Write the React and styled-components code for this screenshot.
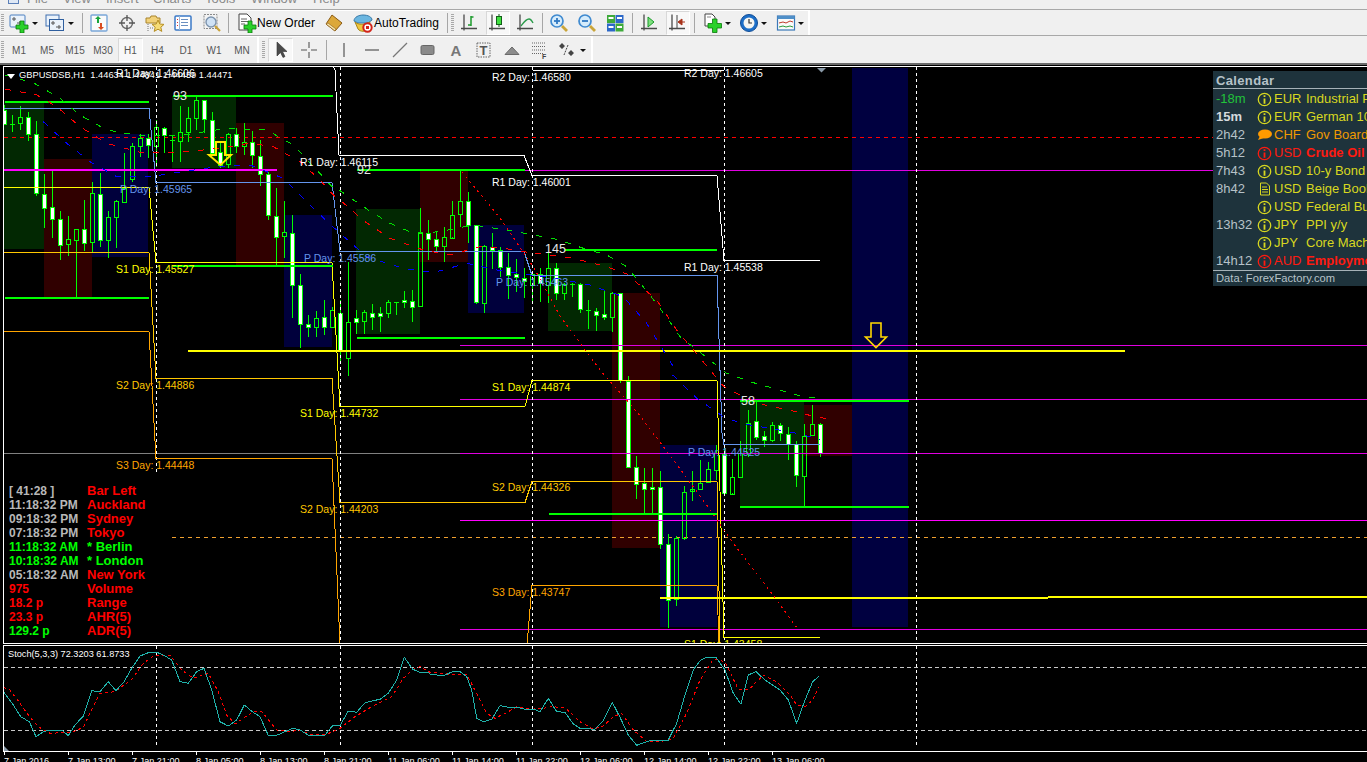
import React from "react";
import styled, { createGlobalStyle } from "styled-components";

const Global = createGlobalStyle`
  html, body { margin: 0; padding: 0; background: #000; overflow: hidden; }
  * { box-sizing: border-box; }
`;
const FONT = `"Liberation Sans", Arial, sans-serif`;

const Page = styled.div`
  width: 1367px; height: 762px; display: flex; flex-direction: column;
  overflow: hidden; font-family: ${FONT}; background: #f0f0f0;
`;
const MenuBar = styled.div`
  height: 10px; flex: none; display: flex; overflow: hidden; background: #f0f0f0;
  border-bottom: 1px solid #a8a8a8; position: relative;
`;
const MenuLogo = styled.div`
  width: 11px; height: 11px; margin: -7px 0 0 8px; border: 1px solid #5b7fb8; background: #dfe8f5; flex: none;
`;
const MenuItem = styled.span`
  flex: none; width: ${p => p.$w}px; font-size: 13px; line-height: 15px; color: #8a8a8a; margin-top: -9px;
`;
const ToolRow = styled.div`
  height: ${p => p.$h}px; flex: none; display: flex; background: #f0f0f0;
  border-bottom: ${p => (p.$rule ? "1px solid #a8a8a8" : "none")};
`;
const Band = styled.div`
  flex: none; width: ${p => p.$w}px; display: flex; align-items: center; height: 100%;
  border-right: 2px solid #fff; border-top: 1px solid #fff;
`;
const Gripper = styled.div`
  flex: none; width: ${p => p.$w}px; height: 18px; padding-left: ${p => p.$pad || 1}px;
  &::before { content: ""; display: block; width: 3px; height: 18px;
    background: repeating-linear-gradient(#a8a8a8 0 1px, transparent 1px 2px); }
`;
const Sep = styled.div`
  flex: none; width: 1px; height: 20px; background: #a6a6a6; margin-left: ${p => p.$ml || 0}px;
`;
const Tool = styled.div`
  flex: none; width: ${p => p.$w}px; height: 24px; margin-left: ${p => p.$ml || 0}px;
  display: flex; align-items: center; justify-content: center; font-size: 10px; color: #555;
  ${p => p.$on && `
    background-color: #f8f8f8;
    background-image: radial-gradient(#e4e4e4 0.5px, transparent 0.6px);
    background-size: 2px 2px;
    border: 1px solid #d8d8d8; border-right-color: #fff; border-bottom-color: #fff;
  `}
`;
const TextTool = styled.div`
  flex: none; width: ${p => p.$w}px; height: 24px; margin-left: ${p => p.$ml || 0}px;
  padding-left: ${p => p.$pad}px; display: flex; align-items: center; gap: ${p => p.$gap}px;
  font-size: 12px; color: #000; white-space: nowrap;
`;
const Drop = styled.div`
  flex: none; width: ${p => p.$w}px; height: 24px; display: flex; align-items: center; justify-content: center;
  &::before { content: ""; border: 3px solid transparent; border-top: 3px solid #111; border-bottom: 0; width: 0; height: 0; }
`;

/* ---------- toolbar drawings ---------- */
const Plus = ({ x = 9, y = 9, s = 11 }) => {
  const t = s / 3;
  return (
    <path
      d={`M${x + t} ${y}h${t}v${t}h${t}v${t}h${-t}v${t}h${-t}v${-t}h${-t}v${-t}h${t}z`}
      fill="#2ad12a" stroke="#0a7a0a" strokeWidth=".8"
    />
  );
};
const I = ({ w = 20, h = 20, children }) => (
  <svg width={w} height={h} viewBox="0 0 20 20">{children}</svg>
);
const Axes = ({ c = "#4a4a4a" }) => (
  <path d="M4 1.5V17.5M1 15.5H17" stroke={c} strokeWidth="1.3" fill="none" />
);
const NewChartIcon = () => (
  <I>
    <rect x="1" y="2" width="15" height="12" rx="1" fill="#eaf2fb" stroke="#4a7fc0" />
    <path d="M3 6h4M5 4v4M8 10h5M11 8v4" stroke="#555" />
    <Plus x={7} y={8} s={12} />
  </I>
);
const ProfileIcon = () => (
  <I>
    <rect x="1" y="2" width="13" height="11" fill="#eaf2fb" stroke="#3f6fb0" />
    <rect x="4.5" y="6.5" width="14" height="11" fill="#eaf2fb" stroke="#2f5f9f" />
    <path d="M6 10h4M8 8v4M11 14h5M14 12v4" stroke="#555" />
  </I>
);
const WatchIcon = () => (
  <I>
    <rect x="2" y="2" width="16" height="16" rx="1" fill="#fafafa" stroke="#7aa7d8" strokeWidth="1.4" />
    <path d="M8 10V6H6l3-3 3 3h-2v4z" fill="#19a53a" />
    <path d="M11 10v4H9l3 3 3-3h-2v-4z" fill="#d84b1e" />
  </I>
);
const CrossIcon = () => (
  <I>
    <circle cx="10" cy="10" r="5.5" fill="none" stroke="#6a6a6a" strokeWidth="1.4" />
    <path d="M10 2v6M10 12v6M2 10h6M12 10h6" stroke="#555" strokeWidth="1.3" />
  </I>
);
const NavIcon = () => (
  <I w={20}>
    <path d="M1 5h4l1 -2h5l1 2h3v5H1z" fill="#f2d27a" stroke="#a8842c" />
    <path d="M13 7l1.8 4 4.2.4-3.2 2.8 1 4.2-3.8-2.2-3.8 2.2 1-4.2L7 11.4l4.2-.4z" fill="#f6dc76" stroke="#b68f24" />
    <path d="M3 11v7M5 15h4" stroke="#777" strokeDasharray="1 1" />
  </I>
);
const TermIcon = () => (
  <I>
    <rect x="2" y="3" width="16" height="14" rx="1" fill="#fff" stroke="#3a78c6" strokeWidth="1.5" />
    <path d="M6.5 3v14" stroke="#9ab8dc" />
    <path d="M4 6.5h1M4 9.5h1M4 12.5h1" stroke="#d33" />
    <path d="M8 6.5h7M8 9.5h7M8 12.5h7" stroke="#6a8fc0" />
  </I>
);
const TesterIcon = () => (
  <I>
    <rect x="2" y="1.5" width="13" height="14" fill="#f3f3f3" stroke="#8a8a8a" strokeDasharray="2 1" />
    <circle cx="9" cy="9" r="5" fill="#cfe2f5" stroke="#7c93ad" strokeWidth="1.4" />
    <path d="M13 13l5 5" stroke="#c9a23a" strokeWidth="2.2" />
  </I>
);
const OrderIcon = () => (
  <I w={20} h={20}>
    <path d="M2 1h8l4 4v12H2z" fill="#fff" stroke="#444" />
    <path d="M4 6h6M4 8.5h7M4 11h4" stroke="#666" />
    <Plus x={7} y={8} s={12} />
  </I>
);
const BookIcon = () => (
  <I>
    <path d="M8 2l10 8-7 8L2 11z" fill="#dca83a" stroke="#8a5a14" />
    <path d="M2 11l9 7 1-2-8-6z" fill="#f5e2a8" stroke="#8a5a14" strokeWidth=".6" />
  </I>
);
const AutoIcon = () => (
  <I w={20} h={20}>
    <path d="M1 8c0-4 5-6 9-6 5 0 9 2 9 5l-4 3H5z" fill="#6bb6e0" stroke="#3a7aa8" />
    <path d="M2 9c3 3 10 3 15 0l-2 7c-2 3-8 3-10 0z" fill="#f0c63c" stroke="#a88518" />
    <circle cx="14.5" cy="14.5" r="4.2" fill="#fff" stroke="#d2241a" strokeWidth="2" />
    <rect x="13" y="13" width="3" height="3" fill="#d2241a" />
  </I>
);
const BarsIcon = () => (
  <I><Axes /><path d="M11 3v10M11 4h2.5M8 12h3" stroke="#1c9a2c" strokeWidth="1.5" fill="none" /></I>
);
const CandleIcon = () => (
  <I><Axes /><path d="M11 1v13" stroke="#145f1a" /><rect x="8.5" y="3.5" width="5" height="8" fill="#3fe03f" stroke="#145f1a" /></I>
);
const LineIcon = () => (
  <I><Axes /><path d="M5 13c3-4 5-7 8-7 2 0 3 2 4 4" stroke="#2a9a4a" strokeWidth="1.4" fill="none" /></I>
);
const ZoomIcon = ({ minus }) => (
  <I>
    <circle cx="8" cy="8" r="6" fill="#d6ecfb" stroke="#3f8ad0" strokeWidth="1.7" />
    <path d="M5 8h6" stroke="#2f79c2" strokeWidth="1.8" />
    {!minus && <path d="M8 5v6" stroke="#2f79c2" strokeWidth="1.8" />}
    <path d="M13 13l5 5" stroke="#c9a53a" strokeWidth="2.8" />
  </I>
);
const TileIcon = () => (
  <I>
    <rect x="2" y="2" width="8" height="8" fill="#3eaa3a" />
    <rect x="10.5" y="2" width="8" height="8" fill="#2c68c8" />
    <rect x="2" y="10.5" width="8" height="8" fill="#2c68c8" />
    <rect x="10.5" y="10.5" width="8" height="8" fill="#3eaa3a" />
    <path d="M3.5 5h5M12 5h5M3.5 14h5M12 14h5" stroke="#fff" strokeWidth="2" />
  </I>
);
const ScrollIcon = () => (
  <I><Axes /><path d="M8 4l6 5-6 5z" fill="#7ee07e" stroke="#1a9a2a" /></I>
);
const ShiftIcon = () => (
  <I><Axes /><path d="M9 2v13" stroke="#444" /><path d="M17 9h-4M10 9l4-3v6z" stroke="#a8321a" fill="#a8321a" /></I>
);
const IndIcon = () => (
  <I>
    <path d="M3 1h7l3 3v9H3z" fill="#fff" stroke="#444" />
    <path d="M5 4h4" stroke="#888" />
    <Plus x={6} y={6} s={13.5} />
  </I>
);
const ClockIcon = () => (
  <I w={20}>
    <circle cx="10" cy="10" r="8.5" fill="#1d6fc8" stroke="#0f4c96" />
    <circle cx="10" cy="10" r="5.5" fill="#f6f6f2" />
    <path d="M10 6v4h3" stroke="#333" strokeWidth="1.2" fill="none" />
  </I>
);
const TplIcon = () => (
  <I>
    <rect x="1.5" y="3" width="17" height="14" fill="#fafafa" stroke="#3a78b8" strokeWidth="1.2" />
    <rect x="1.5" y="3" width="17" height="3" fill="#4f8fc8" />
    <path d="M3 10l4-1 3 1 4-2 3 1" stroke="#c0392b" fill="none" />
    <path d="M3 14l4-1 3 1 4-1 3 1" stroke="#2a9a3a" fill="none" />
  </I>
);
const ArrowIcon = () => (
  <I><path d="M6 2v14l3.5-3.5 2.5 5 2-1-2.5-5H16z" fill="#4a4a4a" stroke="#333" strokeWidth=".6" /></I>
);
const PlusLineIcon = () => (
  <I><path d="M10 2v6M10 12v6M2 10h6M12 10h6" stroke="#555" strokeWidth="1.1" /></I>
);
const VIcon = () => <I><path d="M10 3v14" stroke="#555" strokeWidth="1.2" /></I>;
const HIcon = () => <I><path d="M3 10h14" stroke="#555" strokeWidth="1.2" /></I>;
const TrendIcon = () => <I><path d="M3 17L17 3" stroke="#777" strokeWidth="1.2" /></I>;
const RectIcon = () => <I><rect x="3" y="5.5" width="13" height="9" rx="1.5" fill="#8a8a8a" stroke="#666" /></I>;
const TriIcon = () => <I><path d="M3 14.5L10 7l7 7.5z" fill="#8c8c8c" stroke="#6a6a6a" /></I>;
const BoxT = () => (
  <I>
    <rect x="3" y="3" width="13" height="14" fill="none" stroke="#666" strokeDasharray="1.5 1" />
    <text x="5.5" y="15" fontFamily={FONT} fontWeight="700" fontSize="13" fill="#555">T</text>
  </I>
);
const FibIcon = () => (
  <I>
    <path d="M2 3h14M2 6.5h14M2 10h14M2 13.5h11" stroke="#666" strokeDasharray="1 1" />
    <text x="12" y="19" fontFamily={FONT} fontWeight="700" fontSize="7" fill="#444">F</text>
  </I>
);
const ShapesIcon = () => (
  <I>
    <path d="M5 3l3 3-3 3-3-3zM14 10l3 3-3 3-3-3z" fill="#444" />
    <path d="M11 5l-4 10" stroke="#444" strokeDasharray="2 1" />
  </I>
);
const GlyphA = styled.span`font-size: 15px; font-weight: 700; color: #777; font-family: ${FONT};`;

/* ---------- chart ---------- */
const ChartFrame = styled.div`
  flex: 1; min-height: 0; background: #000; padding: 1px 0 0 3px; overflow: hidden;
  border-top: 2px solid #6a6a6a;
`;
const MainPane = styled.div`
  position: relative; height: 578px; overflow: hidden; background: #000;
  border: 1px solid #fff; border-width: 1px 0 1px 1px;
`;
const SubPane = styled.div`
  position: relative; height: 107px; margin-top: 1px; overflow: hidden; background: #000;
  border: 1px solid #fff; border-width: 1px 0 1px 1px;
`;
const Plot = styled.svg`display: block;`;
const AxisRow = styled.div`display: flex; height: 12px; overflow: hidden; margin-left: 1px;`;
const AxisCell = styled.div`
  flex: none; width: 64px; position: relative; padding-top: 3px;
  font-size: 9.1px; line-height: 12px; color: #fff; white-space: nowrap;
  &::before { content: ""; position: absolute; left: 0; top: 0; width: 1px; height: 3px; background: #fff; }
`;
const PriceLabel = styled.div`
  position: absolute; left: ${p => p.$x - 4}px; top: ${p => p.$y - 67 - 7}px;
  font-size: ${p => p.$size || 10.5}px; line-height: 14px; color: ${p => p.$c}; white-space: nowrap;
`;
const Caption = styled.div`
  position: absolute; left: 15px; top: 1px; font-size: 9.3px; line-height: 14px; color: #fff; white-space: pre;
`;
const CaptionMark = styled.div`
  position: absolute; left: 3px; top: 7px; width: 0; height: 0;
  border: 4px solid transparent; border-top: 5px solid #fff; border-bottom: 0;
`;
const StochTitle = styled.div`
  position: absolute; left: 4px; top: 1px; font-size: 9.2px; line-height: 14px; color: #fff; white-space: nowrap;
`;
const ClockPanel = styled.div`
  position: absolute; left: 0; bottom: 0; width: 168px; height: 171px; background: #000;
  padding: 12px 0 0 5px; display: grid; grid-template-columns: 78px 1fr; grid-auto-rows: 14px;
  font-size: 12px; font-weight: 700; line-height: 14px; white-space: nowrap;
`;
const ClockText = styled.span`color: ${p => p.$c};`;
const ClockName = styled.span`color: ${p => p.$c}; font-size: 13px;`;
const Calendar = styled.div`
  position: absolute; left: 1209px; top: 4px; width: 300px; height: 215px;
  background: #1e333c; color: #b6c2c8; display: flex; flex-direction: column; overflow: hidden;
`;
const CalHead = styled.div`
  height: 18px; padding-left: 3px; font-size: 13px; font-weight: 700; letter-spacing: .35px;
  line-height: 19px; color: #b6c2c8; border-bottom: 1px solid #a6b2b8; flex: none;
`;
const CalRow = styled.div`
  height: 18px; flex: none; display: grid; grid-template-columns: 39px 19px 32px 1fr; align-items: start;
  padding-left: 3px; font-size: 13px; line-height: 20px; white-space: nowrap;
`;
const CalTime = styled.span`
  color: ${p => p.$c || "#b6c2c8"}; font-weight: ${p => (p.$b ? 700 : 400)};
`;
const CalIcon = styled.span`display: flex; align-items: center; justify-content: center; height: 20px;`;
const CalText = styled.span`color: ${p => p.$c}; font-weight: ${p => (p.$b ? 700 : 400)};`;
const CalFoot = styled.div`
  margin-top: auto; height: 16px; border-top: 1px solid #a6b2b8; padding-left: 3px;
  font-size: 11.2px; line-height: 15px; color: #b6c2c8; flex: none;
`;

const Info = ({ c }) => (
  <svg width="15" height="15" viewBox="0 0 14 14">
    <circle cx="7" cy="7" r="5.8" fill="none" stroke={c} strokeWidth="1.2" />
    <path d="M7 3v1.7M7 6v5" stroke={c} strokeWidth="1.7" />
  </svg>
);
const Bubble = () => (
  <svg width="15" height="12" viewBox="0 0 15 12">
    <ellipse cx="8" cy="5" rx="7" ry="4.5" fill="#ff9a00" />
    <path d="M3 7L1 11l6-2z" fill="#ff9a00" />
  </svg>
);
const Doc = () => (
  <svg width="12" height="14" viewBox="0 0 12 14">
    <path d="M1.5 1h6l3 3v9h-9z" fill="none" stroke="#d8d820" />
    <path d="M3 5h5M3 7.5h6M3 10h6" stroke="#d8d820" />
  </svg>
);

const Y = "#d8d820", O = "#f09a00", R = "#ff1a10";
const calRows = [
  ["-18m", "#21c43a", false, <Info c={Y} />, "EUR", "Industrial Production m/m", Y, false],
  ["15m", "#d4dade", true, <Info c={Y} />, "EUR", "German 10-y Bond Auction", Y, false],
  ["2h42", null, false, <Bubble />, "CHF", "Gov Board Member Zurbruegg Speaks", O, false],
  ["5h12", null, false, <Info c={R} />, "USD", "Crude Oil Inventories", R, true],
  ["7h43", null, false, <Info c={Y} />, "USD", "10-y Bond Auction", Y, false],
  ["8h42", null, false, <Doc />, "USD", "Beige Book", Y, false],
  ["", null, false, <Info c={Y} />, "USD", "Federal Budget Balance", Y, false],
  ["13h32", null, false, <Info c={Y} />, "JPY", "PPI y/y", Y, false],
  ["", null, false, <Info c={Y} />, "JPY", "Core Machinery Orders m/m", Y, false],
  ["14h12", null, false, <Info c={R} />, "AUD", "Employment Change", R, true],
];

const GR = "#b8b8b8", LI = "#00ff00", RD = "#ff0000";
const clockRows = [
  ["[ 41:28 ]", GR, "Bar Left", RD],
  ["11:18:32 PM", GR, "Auckland", RD],
  ["09:18:32 PM", GR, "Sydney", RD],
  ["07:18:32 PM", GR, "Tokyo", RD],
  ["11:18:32 AM", LI, "* Berlin", LI],
  ["10:18:32 AM", LI, "* London", LI],
  ["05:18:32 AM", GR, "New York", RD],
  ["975", RD, "Volume", RD],
  ["18.2 p", RD, "Range", RD],
  ["23.3 p", RD, "AHR(5)", RD],
  ["129.2 p", LI, "ADR(5)", RD],
];

const W = "#ffffff", BL = "#6495ed", S1 = "#ffff00", S2 = "#ffc800", S3 = "#ffa500";
const labels = [
  [116, 73, "R1 Day: 1.46606", W], [492, 77, "R2 Day: 1.46580", W], [684, 73, "R2 Day: 1.46605", W],
  [300, 162, "R1 Day: 1.46115", W], [492, 182, "R1 Day: 1.46001", W], [684, 267, "R1 Day: 1.45538", W],
  [120, 189, "P Day: 1.45965", BL], [304, 258, "P Day: 1.45586", BL], [496, 282, "P Day: 1.45463", BL], [688, 452, "P Day: 1.44525", BL],
  [116, 269, "S1 Day: 1.45527", S1], [300, 413, "S1 Day: 1.44732", S1], [492, 387, "S1 Day: 1.44874", S1], [684, 644, "S1 Day: 1.43458", S1],
  [116, 385, "S2 Day: 1.44886", S2], [300, 509, "S2 Day: 1.44203", S2], [492, 487, "S2 Day: 1.44326", S2],
  [116, 465, "S3 Day: 1.44448", S3], [492, 592, "S3 Day: 1.43747", S3],
];
const counts = [[173, 96, "93"], [357, 170, "92"], [545, 249, "145"], [741, 401, "58"]];

const G = "#022802", RB = "#300000", BB = "#00003c";
const zones = [
  [4, 101, 44, 249, G], [44, 159, 92, 297, RB], [92, 134, 148, 257, BB],
  [172, 96, 236, 168, G], [236, 123, 284, 265, RB], [284, 215, 332, 347, BB],
  [356, 209, 420, 334, G], [420, 170, 468, 262, RB], [468, 225, 524, 313, BB],
  [548, 263, 612, 331, G], [612, 293, 660, 548, RB], [660, 445, 717, 627, BB],
  [740, 401, 804, 507, G], [804, 405, 852, 456, RB], [852, 68, 908, 627, "#000040"],
];

// [x, bodyTop, bodyBottom, wickTop, wickBottom, white?] measured in crops of the picture
const cz5 = [
  [14,135,178,120,178,1],[37,178,178,150,200,0],[61,157,176,122,195,0],[85,157,208,140,228,1],[109,208,385,168,392,1],
  [133,388,430,328,490,1],[157,427,463,318,520,1],[181,463,541,438,585,1],[205,523,539,453,573,0],[229,492,524,492,698,0],
  [253,492,533,405,557,1],[277,385,533,350,560,0],[301,388,527,325,545,1],[325,457,527,438,578,0],[349,408,455,405,548,0],
  [373,368,410,265,410,0],[397,244,342,234,350,0],[421,219,242,208,275,0],[445,220,240,208,280,1],[469,187,245,165,305,0],
  [493,190,212,187,265,1],[517,225,225,210,290,0],[541,200,227,123,290,0],[565,160,203,125,230,0],[589,105,160,95,195,0],
  [613,105,163,105,205,1],[637,166,265,140,270,1],[661,262,300,232,310,1],[685,208,298,205,310,0],[709,208,245,190,265,1],
  [733,232,245,175,270,0],[757,232,272,198,310,1],[781,272,325,225,362,1],[805,328,452,320,465,1],[829,452,515,370,600,1],
  [853,502,515,408,580,0],[877,505,661,450,760,1],[901,661,778,628,848,1],[925,778,788,750,815,1],[949,760,788,738,815,0],
  [973,757,787,705,810,1],[997,736,788,725,790,0],
];
const cz6 = [
  [1,490,600,450,640,1],[25,517,626,335,678,0],[49,503,514,480,552,1],[73,487,515,480,552,0],[97,488,499,462,540,1],
  [121,490,499,470,545,1],[145,457,490,450,505,0],[169,457,457,457,495,0],[193,451,458,422,473,1],[217,452,469,420,515,1],
  [241,248,467,175,467,0],[265,250,268,210,330,1],[289,268,290,245,305,1],[313,262,290,232,337,0],[337,194,262,153,267,0],
  [361,154,193,62,232,0],[385,154,226,125,278,1],[409,226,458,225,462,1],[433,288,458,285,490,0],[457,290,298,250,358,1],
  [481,299,350,292,380,1],[505,350,373,310,448,1],[529,373,383,328,425,1],[553,383,393,355,443,1],[577,373,407,368,458,0],
  [601,372,400,355,455,1],[625,355,407,310,460,0],[649,355,430,340,450,1],[673,402,430,400,450,0],[697,402,402,400,440,0],
  [721,403,478,400,490,1],[745,480,480,450,538,0],[769,482,495,475,543,1],[793,493,502,423,510,1],[817,430,502,425,545,0],
  [841,430,690,430,700,1],
];
const cz7 = [
  [85,32,290,18,295,1],[109,290,340,258,387,1],[133,340,358,295,432,1],[157,352,358,295,432,1],[181,352,523,303,537,1],
  [205,523,690,492,773,1],[229,505,688,497,708,0],[253,367,505,348,510,0],[277,356,361,304,392,0],[301,338,356,270,360,0],
  [325,298,338,275,340,0],[349,250,302,225,330,0],[373,252,370,225,375,1],[397,320,370,267,375,0],[421,250,322,213,325,0],
  [445,160,250,120,260,0],[469,152,200,95,210,1],[493,199,212,183,232,1],[517,166,212,156,215,0],[541,166,190,160,213,1],
  [565,193,222,172,270,1],[589,222,316,213,352,1],[613,197,318,162,410,0],[637,163,196,105,198,0],[661,163,250,160,262,1],
];
const toReal = (arr, ox, oy) => arr.map(([x, a, b, c, d, w]) => ({
  x: Math.floor(ox + x / 3) + 0.5, top: oy + a / 3, bot: oy + b / 3, hi: oy + c / 3, lo: oy + d / 3, white: !!w,
}));
const candles = [...toReal(cz5, 0, 65), ...toReal(cz6, 340, 150), ...toReal(cz7, 600, 370)];

const pt = (list, ox, oy) => list.map(([x, y]) => `${(ox + x / 3).toFixed(1)},${(oy + y / 3).toFixed(1)}`).join(" ");
const maGreen = [
  pt([[15,30],[100,53],[180,100],[240,150],[320,195],[420,212],[550,210],[680,190],[800,195],[880,240],[950,315],[1010,380]], 0, 65),
  pt([[0,122],[85,180],[150,220],[220,250],[300,245],[400,225],[500,240],[580,255],[650,268],[730,295],[800,315],[860,350],[930,435],[1000,530],[1020,560]], 340, 150),
  pt([[380,10],[460,38],[530,57],[600,78],[650,85]], 600, 370),
].join(" ");
const maRed = [
  pt([[15,72],[110,90],[170,125],[240,185],[320,235],[420,262],[540,262],[640,252],[750,235],[820,245],[900,290],[960,345],[1000,390]], 0, 65),
  pt([[0,150],[75,215],[150,265],[250,300],[330,315],[420,290],[500,296],[550,305],[700,325],[800,350],[860,372],[950,450],[1010,540]], 340, 150),
  pt([[370,48],[410,70],[480,102],[590,125],[650,142],[700,148]], 600, 370),
].join(" ");
const maBlue = [
  pt([[130,170],[200,235],[270,290],[350,335],[450,335],[560,318],[650,305],[750,300],[850,340],[950,440]], 0, 65),
  pt([[0,250],[80,320],[190,355],[280,368],[380,340],[470,360],[570,375],[650,385],[750,405],[850,440],[920,520],[1000,650]], 340, 150),
  pt([[218,15],[290,85],[370,140],[430,162],[510,175],[590,190],[660,208]], 600, 370),
].join(" ");
const steep = "462,172 500,218 534,268 560,316 600,370 637,412 672,458 708,507 733,543 767,587 797,628";

const pivots = [
  [W, "148,66 333,66 335,70 339,155 340,155.5 524,155.5 532,175.5 717,175.5 724,260.5 820,260.5"],
  [W, "533,70.5 724,70.5"],
  [BL, "4,108.5 149,108.5 156,182.5 332,182.5 340,251.5 524,251.5 532,275.5 717,275.5 722,433 724,444.5 820,444.5"],
  [S1, "4,187.5 149,187.5 156,262.5 332,262.5 340,406.5 525,406.5 532,380.5 717,380.5 724,637.5 820,637.5"],
  [S2, "4,252.5 149,252.5 156,378.5 332,378.5 340,502.5 525,502.5 532,481.5 717,481.5 720,645"],
  [S3, "4,331.5 149,331.5 156,458.5 332,458.5 340,645"],
  [S3, "527,645 532,585.5 717,585.5 719,645"],
];
const thick = [
  ["#00ff00", 5, 149, 102], ["#00ff00", 5, 149, 298], ["#00ff00", 173, 333, 96], ["#00ff00", 173, 333, 266],
  ["#00ff00", 357, 525, 170], ["#00ff00", 357, 525, 338], ["#00ff00", 565, 717, 250], ["#00ff00", 549, 717, 514],
  ["#00ff00", 740, 909, 400.5], ["#00ff00", 740, 909, 507],
  ["#ff00ff", 4, 277, 170], ["#ffff00", 188, 657, 350.5], ["#ffff00", 657, 1125, 351],
  ["#ffff00", 660, 1048, 598], ["#ffff00", 1048, 1367, 597],
];
const thin = [
  ["#e000e0", 525, 1367, 170.5], ["#e000e0", 460, 1367, 345.5], ["#e000e0", 460, 1367, 399.5],
  ["#808080", 4, 460, 453.5], ["#e000e0", 460, 1367, 453.5], ["#ff00ff", 460, 1367, 520.5], ["#e000e0", 460, 1367, 629.5],
];
const grid = [156.5, 340.5, 532.5, 724.5, 916.5];

const stochTeal = [
  pt([[10,155],[40,195],[62,230],[88,245],[108,290],[130,275],[150,270],[185,270],[205,287],[225,255],[250,228],[275,152],[300,155],[325,125],[348,152],[372,125],[395,85],[420,48],[445,38],[470,37],[490,45],[515,60],[540,125],[565,130],[590,95],[612,85],[635,150],[660,245],[685,258],[710,240],[733,195],[757,215],[780,230],[805,286],[830,286],[855,275],[878,265],[900,270],[925,285],[975,285],[997,258],[1020,257],[1045,213],[1070,217],[1095,188],[1115,183],[1140,178],[1165,160],[1190,120],[1213,52],[1238,88],[1260,97],[1285,98]], 0, 640),
  pt([[0,102],[40,108],[67,95],[90,95],[110,110],[125,150],[140,235],[160,245],[185,238],[210,197],[235,202],[260,202],[285,208],[310,207],[330,215],[355,175],[380,215],[405,217],[430,252],[450,265],[495,268],[520,242],[547,187],[570,232],[595,285],[620,316],[645,307],[665,300],[715,300],[740,250],[765,165],[790,90],[810,62],[830,52],[858,52],[885,90],[910,160],[933,193],[955,105],[978,95],[1005,120],[1050,150],[1075,180],[1100,250],[1125,180],[1148,125],[1168,108]], 430, 640),
].join(" ");
const stochRed = [
  pt([[10,142],[30,150],[60,190],[85,225],[115,260],[150,280],[190,278],[220,275],[250,262],[270,220],[300,160],[345,155],[395,118],[430,70],[465,45],[510,45],[545,90],[580,115],[625,100],[655,155],[680,225],[705,252],[730,235],[760,215],[785,215],[810,245],[830,270],[870,275],[900,270],[930,283],[975,285],[1020,265],[1065,230],[1115,200],[1175,170],[1210,115],[1240,88],[1260,80],[1290,97]], 0, 640),
  pt([[0,97],[60,103],[110,103],[150,180],[170,220],[195,235],[235,215],[260,200],[300,208],[340,205],[365,200],[405,203],[450,245],[490,268],[520,258],[550,230],[575,220],[610,270],[650,305],[690,305],[730,295],[770,220],[810,120],[850,58],[885,65],[925,148],[955,150],[1000,105],[1040,125],[1080,165],[1100,195],[1125,200],[1148,180],[1168,140]], 430, 640),
].join(" ");

const axisLabels = ["7 Jan 2016","7 Jan 13:00","7 Jan 21:00","8 Jan 05:00","8 Jan 13:00","8 Jan 21:00","11 Jan 06:00","11 Jan 14:00","11 Jan 22:00","12 Jan 06:00","12 Jan 14:00","12 Jan 22:00","13 Jan 06:00"];
const menus = [["File",36],["View",43],["Insert",47],["Charts",52],["Tools",46],["Window",62],["Help",50]];
const frames = ["M1","M5","M15","M30","H1","H4","D1","W1","MN"];

const Candle = ({ c }) => (
  <g stroke="#00ff00" shapeRendering="crispEdges">
    <line x1={c.x} x2={c.x} y1={c.hi} y2={Math.max(c.hi, c.top)} />
    <line x1={c.x} x2={c.x} y1={c.bot} y2={Math.max(c.lo, c.bot)} />
    {c.bot - c.top < 1
      ? <line x1={c.x - 2.5} x2={c.x + 2.5} y1={Math.round(c.top) + .5} y2={Math.round(c.top) + .5} />
      : <rect x={c.x - 2} width={4} y={Math.round(c.top) + .5} height={Math.max(1, Math.round(c.bot - c.top))}
          fill={c.white ? "#fff" : "none"} />}
  </g>
);

const MainChart = () => (
  <Plot width="1363" height="576" viewBox="4 67 1363 576">
    {zones.map(([a, b, c, d, f], i) => <rect key={i} x={a} y={b} width={c - a} height={d - b} fill={f} />)}
    <g shapeRendering="crispEdges" fill="none">
      <line x1="4" x2="1367" y1="137.5" y2="137.5" stroke="#ff0000" strokeDasharray="4 4" />
      <line x1="172" x2="1367" y1="537.5" y2="537.5" stroke="#f0a030" strokeDasharray="4 4" />
      {candles.map((c, i) => <Candle key={i} c={c} />)}
      {thin.map(([c, a, b, y], i) => <line key={i} x1={a} x2={b} y1={y} y2={y} stroke={c} />)}
      {grid.map(x => <line key={x} x1={x} x2={x} y1="67" y2="643" stroke="#fff" strokeDasharray="3 3" />)}
      {pivots.map(([c, p], i) => <polyline key={i} points={p} stroke={c} />)}
      {thick.map(([c, a, b, y], i) => <line key={i} x1={a} x2={b} y1={y} y2={y} stroke={c} strokeWidth="2" />)}
      <polyline points={maGreen} stroke="#00e000" strokeDasharray="6 9" />
      <polyline points={maRed} stroke="#ff0000" strokeDasharray="6 9" />
      <polyline points={maBlue} stroke="#0000ff" strokeDasharray="6 9" />
      <polyline points={steep} stroke="#ff0000" strokeDasharray="2 4" />
    </g>
    <path d="M216 142h9v13h6l-10.5 10-11.5-10h7z" fill="none" stroke="#ffe600" strokeWidth="2" />
    <path d="M871 323h10v14h5.5l-10.5 10.5-10.5-10.5h5.500z" fill="none" stroke="#ffd800" strokeWidth="1.6" />
    <path d="M817 68h9l-4.500 4.500z" fill="#8a9aa8" />
  </Plot>
);

const StochChart = () => (
  <Plot width="1363" height="105" viewBox="4 646 1363 105">
    <g fill="none" shapeRendering="crispEdges">
      <line x1="4" x2="1367" y1="667.5" y2="667.5" stroke="#c8c8c8" strokeDasharray="4 3" />
      <line x1="4" x2="1367" y1="730.5" y2="730.5" stroke="#c8c8c8" strokeDasharray="4 3" />
      {grid.map(x => <line key={x} x1={x} x2={x} y1="646" y2="748" stroke="#fff" strokeDasharray="3 3" />)}
      <polyline points={stochRed} stroke="#ff0000" strokeDasharray="3 3" />
      <polyline points={stochTeal} stroke="#20b2aa" />
    </g>
    <path d="M4 746l5 5H4z" fill="#8a9aa8" />
  </Plot>
);

export default function App() {
  return (
    <Page>
      <Global />
      <MenuBar>
        <MenuLogo />
        <MenuItem $w={8} />
        {menus.map(([m, w]) => <MenuItem key={m} $w={w}>{m}</MenuItem>)}
      </MenuBar>
      <ToolRow $h={26} $rule>
        <Band $w={810}>
          <Gripper $w={7} />
          <Tool $w={24}><NewChartIcon /></Tool><Drop $w={7} />
          <Tool $w={24} $ml={5}><ProfileIcon /></Tool><Drop $w={8} />
          <Sep $ml={7} />
          <Tool $w={28} $ml={2}><WatchIcon /></Tool>
          <Tool $w={28}><CrossIcon /></Tool>
          <Tool $w={28}><NavIcon /></Tool>
          <Tool $w={28}><TermIcon /></Tool>
          <Tool $w={28} $ml={1}><TesterIcon /></Tool>
          <Sep $ml={2} />
          <TextTool $w={86} $ml={3} $pad={5} $gap={0}><OrderIcon />New Order</TextTool>
          <Tool $w={28} $ml={2}><BookIcon /></Tool>
          <TextTool $w={94} $ml={2} $pad={3} $gap={1}><AutoIcon />AutoTrading</TextTool>
          <Sep $ml={3} />
          <Gripper $w={9} $pad={3} />
          <Tool $w={26}><BarsIcon /></Tool>
          <Tool $w={24} $ml={3} $on><CandleIcon /></Tool>
          <Tool $w={26} $ml={3}><LineIcon /></Tool>
          <Sep $ml={3} />
          <Tool $w={28} $ml={2}><ZoomIcon /></Tool>
          <Tool $w={28}><ZoomIcon minus /></Tool>
          <Tool $w={28}><TileIcon /></Tool>
          <Sep $ml={3} />
          <Tool $w={28} $ml={3}><ScrollIcon /></Tool>
          <Tool $w={24} $ml={2} $on><ShiftIcon /></Tool>
          <Sep $ml={4} />
          <Tool $w={24} $ml={5}><IndIcon /></Tool><Drop $w={8} />
          <Tool $w={24} $ml={5}><ClockIcon /></Tool><Drop $w={5} />
          <Tool $w={25} $ml={7}><TplIcon /></Tool><Drop $w={5} />
        </Band>
      </ToolRow>
      <ToolRow $h={27}>
        <Band $w={259}>
          <Gripper $w={5} />
          {frames.map(f => (
            f === "H1"
              ? <Tool key={f} $w={25} $ml={1} $on>{f}</Tool>
              : <Tool key={f} $w={f === "H4" ? 29 : 28}>{f}</Tool>
          ))}
        </Band>
        <Band $w={334}>
          <Gripper $w={9} $pad={3} />
          <Tool $w={25} $on><ArrowIcon /></Tool>
          <Tool $w={28} $ml={2}><PlusLineIcon /></Tool>
          <Sep $ml={3} />
          <Tool $w={28} $ml={3}><VIcon /></Tool>
          <Tool $w={28}><HIcon /></Tool>
          <Tool $w={28}><TrendIcon /></Tool>
          <Tool $w={28}><RectIcon /></Tool>
          <Tool $w={28}><GlyphA>A</GlyphA></Tool>
          <Tool $w={28}><BoxT /></Tool>
          <Tool $w={28}><TriIcon /></Tool>
          <Tool $w={28}><FibIcon /></Tool>
          <Tool $w={26}><ShapesIcon /></Tool>
          <Drop $w={6} />
        </Band>
      </ToolRow>
      <ChartFrame>
        <MainPane>
          <MainChart />
          {labels.map(([x, y, t, c]) => <PriceLabel key={t} $x={x} $y={y} $c={c}>{t}</PriceLabel>)}
          {counts.map(([x, y, t]) => <PriceLabel key={t} $x={x} $y={y} $c="#e8e8e8" $size={12.5}>{t}</PriceLabel>)}
          <CaptionMark />
          <Caption>{"GBPUSDSB,H1  1.44634 1.44841 1.44459 1.44471"}</Caption>
          <ClockPanel>
            {clockRows.map(([a, ca, b, cb], i) => (
              <React.Fragment key={i}>
                <ClockText $c={ca}>{a}</ClockText>
                <ClockName $c={cb}>{b}</ClockName>
              </React.Fragment>
            ))}
          </ClockPanel>
          <Calendar>
            <CalHead>Calendar</CalHead>
            {calRows.map(([t, c, b, icon, cur, title, col, bold], i) => (
              <CalRow key={i}>
                <CalTime $c={c} $b={b}>{t}</CalTime>
                <CalIcon>{icon}</CalIcon>
                <CalText $c={col}>{cur}</CalText>
                <CalText $c={col} $b={bold}>{title}</CalText>
              </CalRow>
            ))}
            <CalFoot>Data: ForexFactory.com</CalFoot>
          </Calendar>
        </MainPane>
        <SubPane>
          <StochChart />
          <StochTitle>Stoch(5,3,3) 72.3203 61.8733</StochTitle>
        </SubPane>
        <AxisRow>
          {axisLabels.map(l => <AxisCell key={l}>{l}</AxisCell>)}
        </AxisRow>
      </ChartFrame>
    </Page>
  );
}
